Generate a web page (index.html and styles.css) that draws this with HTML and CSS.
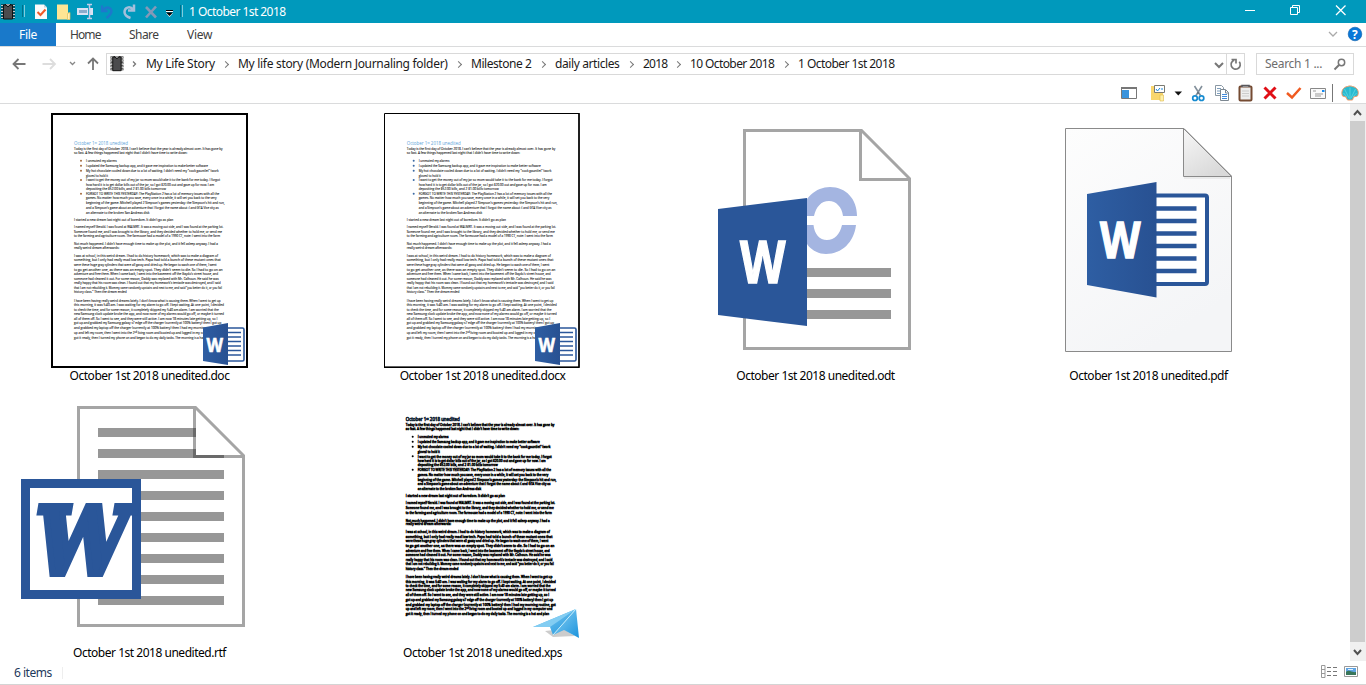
FILE: index.html
```html
<!DOCTYPE html>
<html lang="en">
<head>
<meta charset="utf-8">
<title>1 October 1st 2018</title>
<link rel="stylesheet" href="styles.css">
</head>
<body>
<svg class="defs" width="0" height="0">
  <defs>
    <linearGradient id="cover" x1="0" x2="1"><stop offset="0" stop-color="#2e5ea3"/><stop offset="1" stop-color="#285192"/></linearGradient>
    <linearGradient id="sheet" x1="0" y1="0" x2=".5" y2="1"><stop offset="0" stop-color="#fdfdfd"/><stop offset="1" stop-color="#f4f5f7"/></linearGradient>
    <linearGradient id="fold" x1="0" y1="0" x2=".6" y2="1"><stop offset="0" stop-color="#f7f7f7"/><stop offset="1" stop-color="#d9d9d9"/></linearGradient>
    <linearGradient id="wing" x1="0" y1="0" x2="1" y2="1"><stop offset="0" stop-color="#8ed3f5"/><stop offset="1" stop-color="#1b93dc"/></linearGradient>
    <g id="notebook">
      <path d="M1 1.500h14M1 4.500h14M1 7.500h14M1 10.500h14M1 13.500h14" stroke="#111" stroke-width="2"/>
      <path d="M1 1.500h14M1 4.500h14M1 7.500h14M1 10.500h14M1 13.500h14" stroke="#c8c8c8" stroke-width="1"/>
      <path d="M3.500 1h9v14h-9z" fill="#4b4b4d" stroke="#111"/>
      <path d="M5 0l3 3 3-3" fill="#999" stroke="#111"/>
    </g>
    <g id="badge">
      <rect x="225" y="328" width="19" height="33" rx="1.500" fill="#fff" stroke="#2b579a" stroke-width="1.600"/>
      <path d="M228 332.500h13M228 337h13M228 341.500h13M228 346h13M228 350.500h13M228 355h13" stroke="#2b579a" stroke-width="1.500"/>
      <path d="M203 327.500l25-4.500v42l-25-4z" fill="url(#cover)"/>
      <text x="206.500" y="351.500" font-size="19.500" textLength="16.500" lengthAdjust="spacingAndGlyphs" class="logo-letter">W</text>
    </g>
    <g id="journal" transform="translate(50 110) scale(.33333)">
      <text class="heading" x="72" y="104" textLength="162" lengthAdjust="spacingAndGlyphs">October 1ˢᵗ 2018 unedited</text>
      <g class="body-text">
        <text x="72" y="120" textLength="446" lengthAdjust="spacingAndGlyphs">Today is the first day of October 2018. I can't believe that the year is already almost over. It has gone by</text>
        <text x="72" y="132" textLength="340" lengthAdjust="spacingAndGlyphs">so fast. A few things happened last night that I didn't have time to write down:</text>
        <text x="108" y="156" textLength="92" lengthAdjust="spacingAndGlyphs">I unmuted my alarms</text>
        <text x="108" y="171" textLength="366" lengthAdjust="spacingAndGlyphs">I updated the Samsung backup app, and it gave me inspiration to make better software</text>
        <text x="108" y="186" textLength="398" lengthAdjust="spacingAndGlyphs">My hot chocolate cooled down due to a lot of waiting. I didn't need my "cook gauntlet" (work</text>
        <text x="108" y="200" textLength="66" lengthAdjust="spacingAndGlyphs">gloves) to hold it</text>
        <text x="108" y="214" textLength="402" lengthAdjust="spacingAndGlyphs">I want to get the money out of my jar so mom would take it to the bank for me today. I forgot</text>
        <text x="108" y="227" textLength="384" lengthAdjust="spacingAndGlyphs">how hard it is to get dollar bills out of the jar, so I got $20.00 out and gave up for now. I am</text>
        <text x="108" y="240" textLength="240" lengthAdjust="spacingAndGlyphs">depositing the $52.00 bills, and 2 $1.00 bills tomorrow</text>
        <text x="108" y="255" textLength="400" lengthAdjust="spacingAndGlyphs">FORGOT TO WRITE THIS YESTERDAY: The PlayStation 2 has a lot of memory issues with all the</text>
        <text x="108" y="268" textLength="392" lengthAdjust="spacingAndGlyphs">games. No matter how much you save, every once in a while, it will set you back to the very</text>
        <text x="108" y="283" textLength="416" lengthAdjust="spacingAndGlyphs">beginning of the game. Mitchell played 2 Simpson's games yesterday: the Simpson's hit and run,</text>
        <text x="108" y="297" textLength="398" lengthAdjust="spacingAndGlyphs">and a Simpson's game about an adventure that I forgot the name about :( and GTA Vice city as</text>
        <text x="108" y="311" textLength="190" lengthAdjust="spacingAndGlyphs">an alternate to the broken San Andreas disk</text>
        <text x="72" y="332" textLength="298" lengthAdjust="spacingAndGlyphs">I started a new dream last night out of boredom. It didn't go as plan</text>
        <text x="72" y="354" textLength="448" lengthAdjust="spacingAndGlyphs">I named myself Gerald. I was found at WALMRT. It was a moving out side, and I was found at the parking lot.</text>
        <text x="72" y="368" textLength="444" lengthAdjust="spacingAndGlyphs">Someone found me, and I was brought to the library, and they decided whether to hold me, or send me</text>
        <text x="72" y="382" textLength="438" lengthAdjust="spacingAndGlyphs">to the farming and agriculture room. The farmouse had a model of a 1990 CT, note: I went into the farm</text>
        <text x="72" y="406" textLength="432" lengthAdjust="spacingAndGlyphs">Not much happened. I didn't have enough time to make up the plot, and it fell asleep anyway. I had a</text>
        <text x="72" y="416" textLength="136" lengthAdjust="spacingAndGlyphs">really weird dream afterwards:</text>
        <text x="72" y="441" textLength="432" lengthAdjust="spacingAndGlyphs">I was at school, in this weird dream. I had to do history homework, which was to make a diagram of</text>
        <text x="72" y="454" textLength="440" lengthAdjust="spacingAndGlyphs">something, but I only had really mad low tech. Papa had told a bunch of these mutant ones that</text>
        <text x="72" y="468" textLength="428" lengthAdjust="spacingAndGlyphs">were these huge gray cylinders that were all gassy and dried up. He began to wash one of them, I went</text>
        <text x="72" y="482" textLength="446" lengthAdjust="spacingAndGlyphs">to go get another one, as there was an empty spot. They didn't seem to die. So I had to go on an</text>
        <text x="72" y="496" textLength="432" lengthAdjust="spacingAndGlyphs">adventure and free them. When I came back, I went into the basement off the Gaydo's street house, and</text>
        <text x="72" y="510" textLength="434" lengthAdjust="spacingAndGlyphs">someone had cleaned it out. For some reason, Daddy was replaced with Mr. Calhoun. He said he was</text>
        <text x="72" y="523" textLength="440" lengthAdjust="spacingAndGlyphs">really happy that his room was clean. I found out that my homework's tentacle was destroyed, and I said</text>
        <text x="72" y="536" textLength="444" lengthAdjust="spacingAndGlyphs">that I am not rebuilding it. Mommy came randomly upstairs and next to me, and said "you better do it, or you fail</text>
        <text x="72" y="550" textLength="158" lengthAdjust="spacingAndGlyphs">history class." Then the dream ended</text>
        <text x="72" y="576" textLength="440" lengthAdjust="spacingAndGlyphs">I have been having really weird dreams lately. I don't know what is causing them. When I went to get up</text>
        <text x="72" y="589" textLength="450" lengthAdjust="spacingAndGlyphs">this morning, it was 5:40 am. I was waiting for my alarm to go off. I kept waiting. At one point, I decided</text>
        <text x="72" y="602" textLength="434" lengthAdjust="spacingAndGlyphs">to check the time, and for some reason, it completely skipped my 5:40 am alarm. I am worried that the</text>
        <text x="72" y="615" textLength="450" lengthAdjust="spacingAndGlyphs">new Samsung clock update broke the app, and now none of my alarms would go off, or maybe it turned</text>
        <text x="72" y="629" textLength="430" lengthAdjust="spacingAndGlyphs">all of them off. So I went to see, and they were still active. I am now 18 minutes late getting up, so I</text>
        <text x="72" y="643" textLength="442" lengthAdjust="spacingAndGlyphs">got up and grabbed my Samsung galaxy s7 edge off the charger (currently at 100% battery) then I got up</text>
        <text x="72" y="658" textLength="450" lengthAdjust="spacingAndGlyphs">and grabbed my laptop off the charger (currently at 100% battery) then I had my morning routine, got</text>
        <text x="72" y="672" textLength="440" lengthAdjust="spacingAndGlyphs">up and left my room, then I went into the 2ⁿᵈ living room and booted up and logged in my computer and</text>
        <text x="72" y="686" textLength="430" lengthAdjust="spacingAndGlyphs">got it ready, then I turned my phone on and began to do my daily tasks. The morning is a hat and plan</text>
      </g>
      <g class="dots"><circle cx="93" cy="152" r="3"/><circle cx="93" cy="167" r="3"/><circle cx="93" cy="182" r="3"/><circle cx="93" cy="210" r="3"/><circle cx="93" cy="251" r="3"/></g>
    </g>
  </defs>
</svg>

<div class="window">
  <header class="titlebar">
    <svg width="21" height="23" viewBox="0 0 21 23"><use href="#notebook" transform="translate(0 4)"/></svg>
    <i class="divider"></i>
    <svg class="first-tool" width="22" height="23" viewBox="30 0 22 23"><path d="M35 4.500h9l3 3v11.500h-12z" fill="#fafafa"/><path d="M44 4.500v3h3" fill="#c5d5dc"/><path d="M37.500 12l3 3 5-5.500" fill="none" stroke="#ef5a28" stroke-width="2"/></svg>
    <svg width="22" height="23" viewBox="52 0 22 23"><path d="M57 4.500h11v8l2 1v6H57z" fill="#ffe594"/><path d="M67.500 13.500l2.500-1v7h-2.500z" fill="#fff0bd" stroke="#e3bd55" stroke-width=".7"/></svg>
    <svg width="23" height="23" viewBox="74 0 23 23"><path d="M77 8h11v7H77zM90 8h3v7h-3z" fill="#dbe2f4"/><path d="M79 10h8v3h-8z" fill="#8caccc"/><path d="M87 4.500h5M87 18.500h5M89.500 4.500v14" stroke="#c4cce8" stroke-width="1.500"/></svg>
    <svg width="22" height="23" viewBox="97 0 22 23"><path d="M102 5.500v5.500h5.500M102.500 10.500c4-5 9-3 9 1-.5 3-3 5-5 6.500" fill="none" stroke="#1e78cc" stroke-width="2.300"/></svg>
    <svg width="22" height="23" viewBox="119 0 22 23"><path d="M134 4.500v6h-6M133.500 10c-4-5-9-2-9 2 0 3 3 5 6 6" fill="none" stroke="#a5bfdb" stroke-width="2.500"/></svg>
    <svg width="21" height="23" viewBox="141 0 21 23"><path d="M146 7l10 10.500M156 6.500L146 17.500" stroke="#8499b8" stroke-width="2.600"/></svg>
    <svg width="16" height="23" viewBox="162 0 16 23"><path d="M166 10.500h7" stroke="#000"/><path d="M166 11.500h7" stroke="#fff"/><path d="M166 13h7l-3.500 4z" fill="#fff"/><path d="M166 12.500h7l-3.500 3.500z" fill="#000"/></svg>
    <i class="divider divider-last"></i>
    <h1 class="title">1 October 1st 2018</h1>
    <svg class="controls" width="136" height="23" viewBox="1230 0 136 23" fill="none" stroke="#fff"><path d="M1245 10.500h10"/><path d="M1290.500 7.500h7v7h-7zM1292.500 7.500v-2h7v7h-2"/><path d="M1336 5.500l9.500 9.500M1345.500 5.500l-9.500 9.500" stroke-width="1.300"/></svg>
  </header>

  <nav class="tabs">
    <span class="tab tab-file">File</span>
    <span class="tab tab-home">Home</span>
    <span class="tab tab-share">Share</span>
    <span class="tab tab-view">View</span>
    <svg class="help" width="46" height="23" viewBox="1320 23 46 23"><path d="M1329 32l4 4 4-4" fill="none" stroke="#aaa" stroke-width="1.300"/><circle cx="1355" cy="34" r="6.800" fill="#0877d8" stroke="#075ba7" stroke-width=".6"/><text x="1352" y="38.500" class="help-mark">?</text></svg>
  </nav>

  <div class="address-row">
    <svg class="nav-icons" width="106" height="34" viewBox="0 47 106 34" fill="none" stroke-width="1.800"><path d="M25.500 64H14M18.500 59L13.500 64l5 5" stroke="#777"/><path d="M42.500 64H54M50 59l5 5-5 5" stroke="#ddd"/><path d="M70 62l2.500 2.500L75 62" stroke="#888" stroke-width="1.300"/><path d="M93 70V59M88 63.500l5-5 5 5" stroke="#777"/></svg>
    <div class="address">
      <svg class="place" width="39" height="20" viewBox="107 54 39 20"><use href="#notebook" transform="translate(109.500 56) scale(.93 .98)"/><path d="M133 61.500l2.500 2.500-2.500 2.500" fill="none" stroke="#777" stroke-width="1.300"/></svg>
      <span class="crumb c1"><b>My Life Story</b></span>
      <span class="crumb c2"><b>My life story (Modern Journaling folder)</b></span>
      <span class="crumb c3"><b>Milestone 2</b></span>
      <span class="crumb c4"><b>daily articles</b></span>
      <span class="crumb c5"><b>2018</b></span>
      <span class="crumb c6"><b>10 October 2018</b></span>
      <span class="crumb c7"><b>1 October 1st 2018</b></span>
      <svg class="refresh" width="33" height="20" viewBox="1211 54 33 20" fill="none" stroke="#777"><path d="M1215 63l4 4 4-4" stroke-width="2"/><path d="M1226.500 54v20" stroke="#d9d9d9"/><path d="M1239.300 61.800a4.600 4.600 0 1 1-5-1.600M1231.500 59.500h4.500v4" stroke-width="1.700"/></svg>
    </div>
    <div class="search"><span class="search-text">Search 1 ...</span><svg width="18" height="20" viewBox="1332 54 18 20" fill="none" stroke="#777"><circle cx="1341.500" cy="62.500" r="3.200" stroke-width="1.500"/><path d="M1339 65l-4.500 4.500" stroke-width="2"/></svg></div>
  </div>

  <div class="toolbar">
    <svg width="266" height="22" viewBox="1100 81 266 22">
      <path d="M1121.500 87.500h15v11h-15z" fill="#fff" stroke="#777"/><path d="M1121 88h16" stroke="#777" stroke-width="2"/><path d="M1122 90h7v8h-7z" fill="#3993dc"/>
      <path d="M1151 86h12v14h-12z" fill="#f9d66d"/><path d="M1160 95h3.500v6h-3.500z" fill="#fff0a8" stroke="#ddb847" stroke-width=".6"/><path d="M1154.500 85.500h10v7h-10z" fill="#fff" stroke="#7a7a72"/><path d="M1156 89l1.500 2 2.500-3" fill="none" stroke="#1988dd"/><path d="M1161 89h2" stroke="#1988dd"/>
      <path d="M1174.500 91.500h7.500l-3.750 4z" fill="#111"/>
      <path d="M1194.500 86l6 9.500M1202 86l-6 9.500" stroke="#83909b" stroke-width="1.600"/><path d="M1198 92v2" stroke="#4d5a66"/><circle cx="1195" cy="98.200" r="2.300" fill="none" stroke="#168bd0" stroke-width="1.700"/><circle cx="1201.500" cy="98.200" r="2.300" fill="none" stroke="#168bd0" stroke-width="1.700"/>
      <path d="M1215.500 85.500h6l2 2v8h-8z" fill="#fff" stroke="#8a98a4"/><path d="M1217 88.500h4M1217 91h5M1217 93.500h4" stroke="#7d9ebd"/><path d="M1220.500 89.500h5l3 3v8h-8z" fill="#fff" stroke="#7c8791"/><path d="M1225.500 90v3h3" fill="none" stroke="#7c8791"/><path d="M1222 94.500h5M1222 96.500h5M1222 98.500h5" stroke="#428bdc"/>
      <rect x="1239.500" y="86.500" width="12" height="14" rx="1" fill="#eee" stroke="#754b32" stroke-width="2"/><path d="M1242 87v-1.500h7V87" fill="#aaa" stroke="#58585d" stroke-width="1.500"/><path d="M1242 91h7M1242 93.500h7M1242 96h7" stroke="#ccc"/>
      <path d="M1264.500 87.500l11 11M1275.500 87.500l-11 11" stroke="#e00f16" stroke-width="3"/>
      <path d="M1287 93l5 4.500 8.500-9.500" fill="none" stroke="#f05a20" stroke-width="2.500"/>
      <path d="M1310.500 88.500h15v10h-15z" fill="#fafafa" stroke="#888"/><path d="M1313 91h3M1315 94h8M1315 96h6" stroke="#999"/><path d="M1322 90h2.500v2h-2.500z" fill="#148bf2"/>
      <path d="M1332.500 84v18" stroke="#777"/>
      <path d="M1342.500 96c-2-5 1-9 5-9.500 2-1 4-.5 5 0 5 1 7 5 5 9.500l-4 1-1 3h-5l-1.500-3z" fill="#29bad0" stroke="#ee9a69"/><path d="M1350 99V87.500M1349 98l-4.500-9M1351 98l4.500-9M1347 97l-3.500-4M1353 97l3.500-4" stroke="#82e8ee" stroke-width=".5"/>
    </svg>
  </div>

  <main class="content">
    <section class="files">
      <figure class="file">
        <svg width="259" height="256" viewBox="20 112 259 256"><rect x="52" y="114" width="195" height="253" fill="#fff" stroke="#000" stroke-width="2"/><use href="#journal" class="ink"/><use href="#badge"/></svg>
        <figcaption>October 1st 2018 unedited.doc</figcaption>
      </figure>
      <figure class="file">
        <svg width="259" height="256" viewBox="353 112 259 256"><path d="M384.500 113.500h194.500v253.500H384.500z" fill="#fff" stroke="#000"/><path d="M579 113v254.500H384" fill="none" stroke="#000" stroke-width="1.500"/><use href="#journal" class="ink ink-docx" x="332.700"/><use href="#badge" x="332"/></svg>
        <figcaption>October 1st 2018 unedited.docx</figcaption>
      </figure>
      <figure class="file">
        <svg width="259" height="256" viewBox="686 112 259 256">
          <path d="M744.500 130.500h117l48 48v170h-165z" fill="#fff" stroke="#a5a5a5" stroke-width="3"/><path d="M860.500 130.500v49h49" fill="none" stroke="#a5a5a5" stroke-width="3"/>
          <path fill="#a4b5e1" d="M800 216C803 198 816 187 830 187c16 0 27 12 27 29h-14c-1-9-7-15-14-15-8 0-13 6-15 15zM800 225h13.500c1 9 6 15 13.500 15s13-6 15-15h14c-2 17-14 29-30 29-14 0-24-12-26-29z"/>
          <path d="M806 268h85v9h-85zM806 289h85v9h-85zM806 310h85v9h-85z" fill="#979797"/>
          <path d="M718 209l89-11v128l-89-11z" fill="#2a5699"/>
          <text x="740" y="283" font-size="59" textLength="45.500" lengthAdjust="spacingAndGlyphs" class="logo-letter logo-heavy">W</text>
        </svg>
        <figcaption>October 1st 2018 unedited.odt</figcaption>
      </figure>
      <figure class="file">
        <svg width="259" height="256" viewBox="1019 112 259 256">
          <path d="M1065.500 128.500h118.500l47.500 47.500v175.500h-166z" fill="url(#sheet)" stroke="#8a8a8a"/><path d="M1184 178h46" stroke="#ddd"/><path d="M1183.500 128.500v48h48z" fill="url(#fold)" stroke="#8a8a8a"/>
          <rect x="1140" y="195.500" width="67" height="88.500" rx="2" fill="#fff" stroke="#2a5699" stroke-width="4"/>
          <path d="M1150 208.500h46.500M1150 221h46.500M1150 233.500h46.500M1150 246h46.500M1150 258.500h46.500M1150 271h46.500" stroke="#2a5699" stroke-width="4.700"/>
          <path d="M1087 194l69.500-12v115.500L1087 285z" fill="url(#cover)"/>
          <text x="1100" y="257.500" font-size="51" textLength="40.500" lengthAdjust="spacingAndGlyphs" class="logo-letter logo-heavy">W</text>
        </svg>
        <figcaption>October 1st 2018 unedited.pdf</figcaption>
      </figure>
      <figure class="file">
        <svg width="259" height="256" viewBox="20 389 259 256">
          <path d="M78.500 407.500h117l48 48v170h-165z" fill="#fff" stroke="#a5a5a5" stroke-width="3"/><path d="M194.500 407.500v49h49" fill="none" stroke="#a5a5a5" stroke-width="3"/>
          <path d="M98 432.500h98M98 453.500h98M98 474.500h126M98 495.500h126M98 516.500h126M98 537.500h126M98 558.500h126M98 579.500h126M98 600.500h126" stroke="#979797" stroke-width="9"/>
          <path d="M193 428h3v9h-3zM193 449h3v6h28v3h-31z" fill="#6a6a6a"/>
          <path d="M25.500 483.500h111v111h-111z" fill="#fff" stroke="#2a5699" stroke-width="9"/>
          <text x="36" y="574" font-size="91" textLength="93" lengthAdjust="spacingAndGlyphs" class="slab-letter">W</text>
        </svg>
        <figcaption>October 1st 2018 unedited.rtf</figcaption>
      </figure>
      <figure class="file">
        <svg width="259" height="256" viewBox="353 389 259 256">
          <use href="#journal" class="ink ink-xps" transform="translate(331.700 276.200)"/>
          <path d="M545 631l8 6 22-1-12-7z" fill="#ccc"/>
          <path d="M533 627l43-18-16 19-7 7-3-8z" fill="url(#wing)"/><path d="M576 609l3 29-15-8-11 5z" fill="url(#wing)"/><path d="M533 627l43-18-26 18z" fill="#83cdf2"/><path d="M576 609l-23 26" stroke="#c9effc" stroke-width="1"/>
        </svg>
        <figcaption>October 1st 2018 unedited.xps</figcaption>
      </figure>
    </section>
    <div class="scrollbar">
      <svg width="16" height="17" viewBox="0 0 16 17"><path d="M4 11l3.500-4 3.500 4" fill="none" stroke="#505050" stroke-width="2"/></svg>
      <div class="thumb"></div>
      <svg width="16" height="19" viewBox="0 0 16 19"><path d="M4 8l3.500 4L11 8" fill="none" stroke="#505050" stroke-width="2"/></svg>
    </div>
  </main>

  <footer class="status">
    <span class="count">6 items</span><i class="status-line"></i>
    <svg class="views" width="46" height="23" viewBox="1320 661 46 23"><path d="M1321.500 665.500h3.500v12h-3.500zM1321.500 669.500h3.500M1321.500 673.500h3.500" fill="none" stroke="#999"/><path d="M1327 667.500h4M1333 667.500h4M1327 671.500h4M1333 671.500h4M1327 675.500h4M1333 675.500h4" stroke="#777"/><path d="M1344.500 666.500h13v10h-13z" fill="#fff" stroke="#999"/><path d="M1346 668h10v7h-10z" fill="#5fa4e3"/><path d="M1346 672c4-3 5 1 10 0v3h-10z" fill="#39765a"/><path d="M1348 669.500h5" stroke="#dff0ff"/></svg>
  </footer>
</div>
</body>
</html>
```
FILE: styles.css
```css
* { box-sizing: border-box; }
body { margin: 0; width: 1366px; height: 685px; overflow: hidden; background: #fff; color: #1a1a1a; font: 12px/18px "Noto Sans", "Open Sans", sans-serif; letter-spacing: -0.3px; }
svg { display: block; flex: none; }
.defs { position: absolute; }
.window { display: flex; flex-direction: column; height: 685px; }

.titlebar { display: flex; height: 23px; background: #0099bc; }
.divider { width: 3px; height: 12px; margin: 5px 0 0 1px; border-left: 1px solid #006f89; border-right: 1px solid #7fccdd; }
.first-tool { margin-left: 5px; }
.divider-last { margin-left: 2px; }
.title { margin: 2px 0 0 6px; color: #fff; font-size: 12px; font-weight: 400; line-height: 19px; letter-spacing: -0.55px; }
.controls { margin-left: auto; }

.tabs { display: flex; height: 24px; border-bottom: 1px solid #dadbdc; color: #404040; }
.tab { height: 23px; line-height: 23px; }
.tab-file { width: 56px; padding-left: 19px; background: #1979ca; color: #fff; }
.tab-home { width: 73px; padding-left: 14px; letter-spacing: -0.9px; }
.tab-share { width: 58px; letter-spacing: -0.55px; }
.help { margin-left: auto; }
.help-mark { font: 700 12px "Open Sans", sans-serif; fill: #fff; }

.address-row { display: flex; height: 34px; padding-top: 6px; }
.nav-icons { margin-top: -6px; }
.address { display: flex; width: 1139px; height: 22px; border: 1px solid #d9d9d9; line-height: 20px; }
.crumb { position: relative; flex: none; white-space: nowrap; }
.crumb b { font-weight: 400; }
.crumb:not(.c7)::after { content: ""; position: absolute; right: 10px; top: 8px; width: 4px; height: 4px; border: solid #777; border-width: 1.300px 1.300px 0 0; transform: rotate(45deg); }
.c1 { width: 92px; }
.c2 { width: 233px; }
.c3 { width: 84px; letter-spacing: -0.45px; }
.c4 { width: 88px; letter-spacing: -0.4px; }
.c5 { width: 47px; letter-spacing: -0.75px; }
.c6 { width: 108px; letter-spacing: -0.6px; }
.c7 { letter-spacing: -0.55px; }
.refresh { margin-left: auto; }
.search { display: flex; justify-content: space-between; width: 98px; height: 22px; margin-left: 11px; padding: 0 3px 0 8px; border: 1px solid #d9d9d9; color: #6d6d6d; line-height: 20px; }

.toolbar { display: flex; justify-content: flex-end; height: 23px; border-bottom: 1px solid #dadbdc; }

.content { display: flex; height: 557px; }
.files { display: grid; grid-template-columns: repeat(4, 259px); grid-auto-rows: 277px; column-gap: 74px; width: 1350px; padding: 8px 0 0 20px; align-content: start; height: 557px; }
.file { margin: 0; height: 277px; text-align: center; color: #000; }
.file figcaption { height: 18px; line-height: 15px; letter-spacing: -0.48px; white-space: nowrap; }
.scrollbar { width: 16px; background: #f0f0f0; }
.thumb { width: 15px; height: 521px; background: #cdcdcd; }

.status { display: flex; height: 24px; border-bottom: 1px solid #d4d4d4; color: #1e395b; }
.count { padding-left: 14px; line-height: 23px; letter-spacing: -0.5px; }
.status-line { height: 12px; margin: 6px 0 0 10px; border-left: 1px solid #eee; }
.views { margin-left: auto; }

.logo-letter { font-family: "Open Sans", sans-serif; font-weight: 700; fill: #fff; stroke: #fff; stroke-width: .6; letter-spacing: 0; }
.logo-heavy { stroke-width: 1.400; }
.slab-letter { font-family: "DejaVu Serif", serif; font-weight: 700; font-style: italic; fill: #2a5699; stroke: #2a5699; stroke-width: 7; letter-spacing: 0; }
.heading { font: 14px "Open Sans", sans-serif; fill: var(--heading, #5b9fd8); stroke: var(--heading-edge, none); letter-spacing: 0; }
.body-text { font: 12.500px "Open Sans", sans-serif; letter-spacing: 0; }
.dots { fill: var(--dot, #a56b3c); stroke: none; }
.ink { fill: #222; stroke: #333; stroke-width: .4; }
.ink-docx { --dot: #3c6ba5; }
.ink-xps { --dot: #000; --heading: #0c2030; --heading-edge: #0c2030; fill: #000; stroke: #000; stroke-width: 2; }
```
